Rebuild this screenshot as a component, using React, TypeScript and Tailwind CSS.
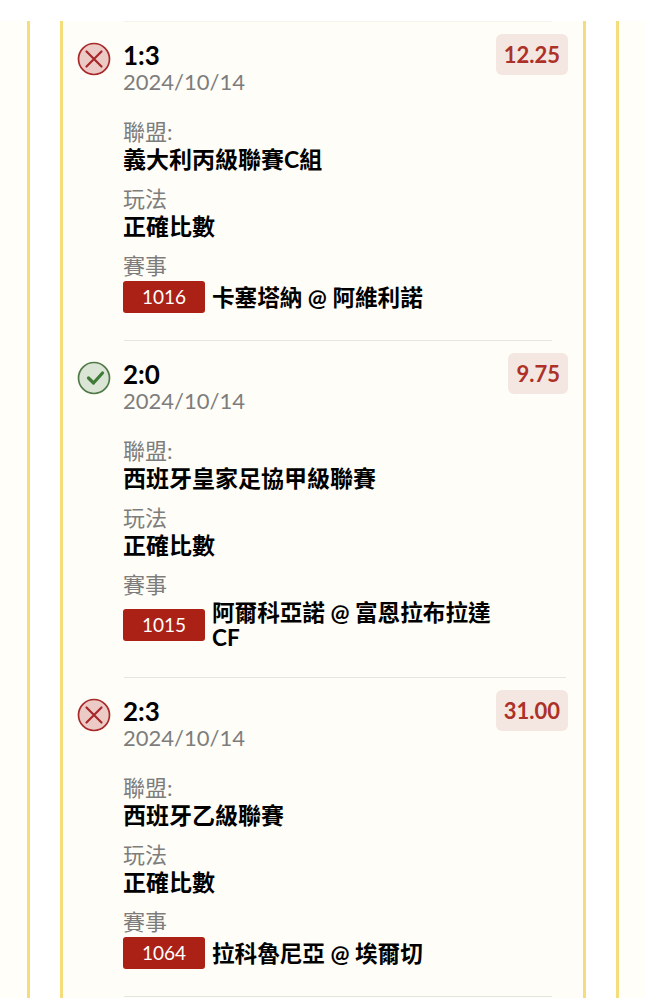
import React from 'react';

interface Bet {
  score: string;
  date: string;
  odds: string;
  won: boolean;
  league: string;
  code: string;
  match: string;
  line: string;
}

const bets: Bet[] = [
  { score: '1:3', date: '2024/10/14', odds: '12.25', won: false, league: '義大利丙級聯賽C組', code: '1016', match: '卡塞塔納 @ 阿維利諾', line: 'w-[428px] bg-[#f3f3ec]' },
  { score: '2:0', date: '2024/10/14', odds: '9.75', won: true, league: '西班牙皇家足協甲級聯賽', code: '1015', match: '阿爾科亞諾 @ 富恩拉布拉達 CF', line: 'w-[428px] bg-[#e6e6e0]' },
  { score: '2:3', date: '2024/10/14', odds: '31.00', won: false, league: '西班牙乙級聯賽', code: '1064', match: '拉科魯尼亞 @ 埃爾切', line: 'w-[442px] bg-[#e6e6e0]' },
];

const StatusIcon = ({ won }: { won: boolean }) =>
  won ? (
    <svg width="34" height="34" viewBox="0 0 34 34">
      <circle cx="17" cy="17" r="15.5" fill="#dbe5d6" stroke="#4f7a47" strokeWidth="1.7" />
      <path d="M11.5 17l5 5 9-10" fill="none" stroke="#3f7a38" strokeWidth="3.2" strokeLinecap="round" strokeLinejoin="round" />
    </svg>
  ) : (
    <svg width="34" height="34" viewBox="0 0 34 34">
      <circle cx="17" cy="17" r="15.5" fill="#eccbc6" stroke="#a8282a" strokeWidth="1.7" />
      <path d="M9.5 9.5l15 15M24.5 9.5l-15 15" fill="none" stroke="#a8282a" strokeWidth="2.2" strokeLinecap="round" />
    </svg>
  );

const BetRow = ({ bet }: { bet: Bet }) => (
  <div className="flex flex-col">
    <div className={`h-px ml-[61px] ${bet.line}`} />
    <div className="flex pt-[20px] pb-[27px]">
      <div className="w-[60px] pl-[14px] shrink-0">
        <StatusIcon won={bet.won} />
      </div>
      <div className="flex-1 flex flex-col min-w-0">
        <div className="flex justify-between items-start">
          <div>
            <div className="text-[26px] leading-[26px] font-bold text-black">{bet.score}</div>
            <div className="text-[22px] leading-[28px] text-[#7d7d7d]">{bet.date}</div>
          </div>
          <div className="rounded-md bg-[#f4e6e0] px-[8px] h-[41px] flex items-center text-[22px] font-bold text-[#ac3128] mt-[-8px]">{bet.odds}</div>
        </div>
        <div className="mt-[22px] text-[22px] leading-[27px] text-[#7d7d7d]">聯盟:</div>
        <div className="text-[23px] leading-[29px] font-bold text-black">{bet.league}</div>
        <div className="mt-[11px] text-[22px] leading-[27px] text-[#7d7d7d]">玩法</div>
        <div className="text-[23px] leading-[29px] font-bold text-black">正確比數</div>
        <div className="mt-[11px] text-[22px] leading-[27px] text-[#7d7d7d]">賽事</div>
        <div className="flex items-center mt-[2px]">
          <div className="w-[82px] h-[32px] rounded-[3px] bg-[#ab2115] text-white text-[19px] flex items-center justify-center shrink-0">{bet.code}</div>
          <div className="ml-[7px] w-[290px] text-[22.6px] leading-[25px] font-bold text-black">{bet.match}</div>
        </div>
      </div>
    </div>
  </div>
);

export default function App() {
  return (
    <div className="h-[1000px] overflow-hidden bg-white pt-[21px] font-['Lato','Noto_Sans_CJK_TC',sans-serif]">
      <div className="h-[977px] bg-[#fffef8] pl-[27px] pr-[26px]">
        <div className="h-full bg-white border-x-[3px] border-[#f6dd7c] px-[30px]">
          <div className="h-full bg-[#fffdf7] border-x-[3px] border-[#f6dd7c] pr-[15px]">
            {bets.map((b) => (
              <BetRow key={b.code} bet={b} />
            ))}
            <div className="h-px ml-[61px] w-[428px] bg-[#e6e6e0]" />
          </div>
        </div>
      </div>
    </div>
  );
}
